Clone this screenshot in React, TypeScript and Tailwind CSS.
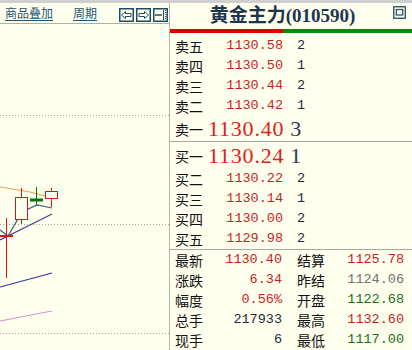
import React from 'react'

type Level = { label: string; price: string; qty: string }

const sells: Level[] = [
  { label: '卖五', price: '1130.58', qty: '2' },
  { label: '卖四', price: '1130.50', qty: '1' },
  { label: '卖三', price: '1130.44', qty: '2' },
  { label: '卖二', price: '1130.42', qty: '1' },
]

const buys: Level[] = [
  { label: '买二', price: '1130.22', qty: '2' },
  { label: '买三', price: '1130.14', qty: '1' },
  { label: '买四', price: '1130.00', qty: '2' },
  { label: '买五', price: '1129.98', qty: '2' },
]

type Stat = { a: string; av: string; ac: string; b: string; bv: string; bc: string }

const stats: Stat[] = [
  { a: '最新', av: '1130.40', ac: 'text-[#c81e1e]', b: '结算', bv: '1125.78', bc: 'text-[#c81e1e]' },
  { a: '涨跌', av: '6.34', ac: 'text-[#c81e1e]', b: '昨结', bv: '1124.06', bc: 'text-[#707070]' },
  { a: '幅度', av: '0.56%', ac: 'text-[#c81e1e]', b: '开盘', bv: '1122.68', bc: 'text-[#187018]' },
  { a: '总手', av: '217933', ac: 'text-[#1c2c3c]', b: '最高', bv: '1132.60', bc: 'text-[#c81e1e]' },
  { a: '现手', av: '6', ac: 'text-[#1c2c3c]', b: '最低', bv: '1117.00', bc: 'text-[#187018]' },
]

const cjk = "font-['Noto_Sans_CJK_SC',sans-serif]"
const mono = "font-['Liberation_Mono',monospace]"

function BoxIcon({ kind }: { kind: 'left' | 'right' | 'split' }) {
  return (
    <svg width="15" height="14" viewBox="0 0 15 14" className="block">
      <rect x="0.75" y="0.75" width="13.5" height="12.5" fill="none" stroke="#1d4d66" strokeWidth="1.5" />
      {kind === 'left' && (
        <polygon points="2.5,7 6.5,3.5 6.5,5.5 12,5.5 12,8.5 6.5,8.5 6.5,10.5" fill="none" stroke="#1d4d66" strokeWidth="1" />
      )}
      {kind === 'right' && (
        <polygon points="12.5,7 8.5,3.5 8.5,5.5 3,5.5 3,8.5 8.5,8.5 8.5,10.5" fill="none" stroke="#1d4d66" strokeWidth="1" />
      )}
      {kind === 'split' && (
        <>
          <line x1="2" y1="7" x2="9" y2="7" stroke="#1d4d66" strokeWidth="1.5" />
          <line x1="10.5" y1="2" x2="10.5" y2="12" stroke="#1d4d66" strokeWidth="1" />
          <line x1="12.5" y1="2" x2="12.5" y2="12" stroke="#1d4d66" strokeWidth="1" strokeDasharray="1 1" />
        </>
      )}
    </svg>
  )
}

function Chart() {
  return (
    <svg width="169" height="326" viewBox="0 24 169 326" className="block">
      {/* grid */}
      {[115, 224, 333].map((y) => (
        <line key={y} x1="0" y1={y + 0.5} x2="169" y2={y + 0.5} stroke="#a8a8a0" strokeDasharray="1 2" />
      ))}
      {/* moving averages */}
      <polyline points="0,187 30,192 52,198" fill="none" stroke="#f0a050" strokeWidth="1.2" />
      <polyline points="0,230 8,236 22,212 37,205 52,208" fill="none" stroke="#3a5f80" strokeWidth="1.2" />
      <polyline points="0,240 52,214" fill="none" stroke="#4a3a90" strokeWidth="1.2" />
      <polyline points="0,287 52,273" fill="none" stroke="#3030b0" strokeWidth="1.2" />
      <polyline points="0,321 52,311" fill="none" stroke="#d890c8" strokeWidth="1.2" />
      {/* candles */}
      <line x1="6.5" y1="218" x2="6.5" y2="278" stroke="#d01818" strokeWidth="1" />
      <line x1="0" y1="236" x2="13" y2="236" stroke="#d01818" strokeWidth="2" />

      <line x1="21.5" y1="188" x2="21.5" y2="197" stroke="#d01818" />
      <line x1="21.5" y1="220" x2="21.5" y2="224" stroke="#d01818" />
      <rect x="15.5" y="197.5" width="12" height="22" fill="#ffffee" stroke="#d01818" />

      <line x1="36.5" y1="187" x2="36.5" y2="206" stroke="#107010" />
      <line x1="30" y1="200" x2="43" y2="200" stroke="#107010" strokeWidth="3" />

      <line x1="51.5" y1="188" x2="51.5" y2="191" stroke="#d01818" />
      <line x1="51.5" y1="199" x2="51.5" y2="207" stroke="#d01818" />
      <rect x="45.5" y="191.5" width="12" height="7" fill="#ffffee" stroke="#d01818" />
    </svg>
  )
}

function LevelRow({ row }: { row: Level }) {
  return (
    <div className="h-[20px] flex items-center leading-none">
      <div className="w-[113px] flex items-center justify-between pl-[5px]">
        <span className={`${cjk} text-[14px] text-[#111]`}>{row.label}</span>
        <span className={`${mono} text-[13.5px] text-[#c81e1e]`}>{row.price}</span>
      </div>
      <span className={`${mono} text-[13.5px] text-[#1c2c3c] pl-[14px]`}>{row.qty}</span>
    </div>
  )
}

function BigRow({ label, price, qty, h }: { label: string; price: string; qty: string; h: string }) {
  return (
    <div className={`${h} flex items-center leading-none`}>
      <div className="w-[38px] pl-[5px]">
        <span className={`${cjk} text-[14px] text-[#111]`}>{label}</span>
      </div>
      <span className="font-['Liberation_Serif',serif] text-[22px] tracking-[0.8px] text-[#e02020]">{price}</span>
      <span className="font-['Liberation_Serif',serif] text-[22px] text-[#2a3a50] pl-[6px]">{qty}</span>
    </div>
  )
}

export default function App() {
  return (
    <div className="w-[412px] h-[350px] bg-[#ffffee] flex flex-col overflow-hidden">
      <div className="h-[3px] bg-[#cfcfcf]" />
      <div className="flex flex-1 min-h-0">
        {/* left: chart panel */}
        <div className="w-[170px] border-r border-[#b4b4b0] flex flex-col">
          <div className="h-[21px] border-b border-[#b0b0a8] flex items-center pl-[5px] pr-[1px]">
            <span className={`${cjk} text-[12px] leading-none text-[#1f5570] underline underline-offset-2`}>商品叠加</span>
            <span className={`${cjk} text-[12px] leading-none text-[#1f5570] underline underline-offset-2 ml-[20px]`}>周期</span>
            <div className="ml-auto flex gap-[2px] mt-[3px]">
              <BoxIcon kind="left" />
              <BoxIcon kind="right" />
              <BoxIcon kind="split" />
            </div>
          </div>
          <div className="flex-1 min-h-0">
            <Chart />
          </div>
        </div>

        {/* right: quote panel */}
        <div className="flex-1 flex flex-col">
          <div className="h-[26px] flex items-center">
            <div className="flex-1 text-center pl-[2px]">
              <span className="font-['Liberation_Serif','Noto_Sans_CJK_SC',serif] font-bold text-[19px] leading-none text-[#1e3550]">
                黄金主力(010590)
              </span>
            </div>
            <svg width="13" height="13" viewBox="0 0 13 13" className="self-start mt-[3px] mr-[6px]">
              <rect x="0.75" y="0.75" width="11.5" height="11.5" fill="none" stroke="#1d4d66" strokeWidth="1.3" />
              <rect x="3.25" y="3.5" width="6.5" height="5.5" fill="none" stroke="#1d4d66" strokeWidth="1.2" />
            </svg>
          </div>
          <div className="h-[4px] flex">
            <div className="w-[113px] bg-[#e00000]" />
            <div className="flex-1 bg-[#0a8a0a]" />
          </div>

          <div className="pt-[3px] border-b border-[#a8a8a0]">
            {sells.map((r) => (
              <LevelRow key={r.label} row={r} />
            ))}
            <BigRow label="卖一" price="1130.40" qty="3" h="h-[25px]" />
          </div>

          <div className="border-b border-[#a8a8a0]">
            <BigRow label="买一" price="1130.24" qty="1" h="h-[27px]" />
            {buys.map((r) => (
              <LevelRow key={r.label} row={r} />
            ))}
          </div>

          <div>
            {stats.map((s) => (
              <div key={s.a} className="h-[20px] flex items-center leading-none">
                <div className="w-[112px] flex items-center justify-between pl-[5px]">
                  <span className={`${cjk} text-[14px] text-[#111]`}>{s.a}</span>
                  <span className={`${mono} text-[13.5px] ${s.ac}`}>{s.av}</span>
                </div>
                <div className="w-[122px] flex items-center justify-between pl-[15px]">
                  <span className={`${cjk} text-[14px] text-[#111]`}>{s.b}</span>
                  <span className={`${mono} text-[13.5px] ${s.bc}`}>{s.bv}</span>
                </div>
              </div>
            ))}
          </div>
        </div>
      </div>
    </div>
  )
}
